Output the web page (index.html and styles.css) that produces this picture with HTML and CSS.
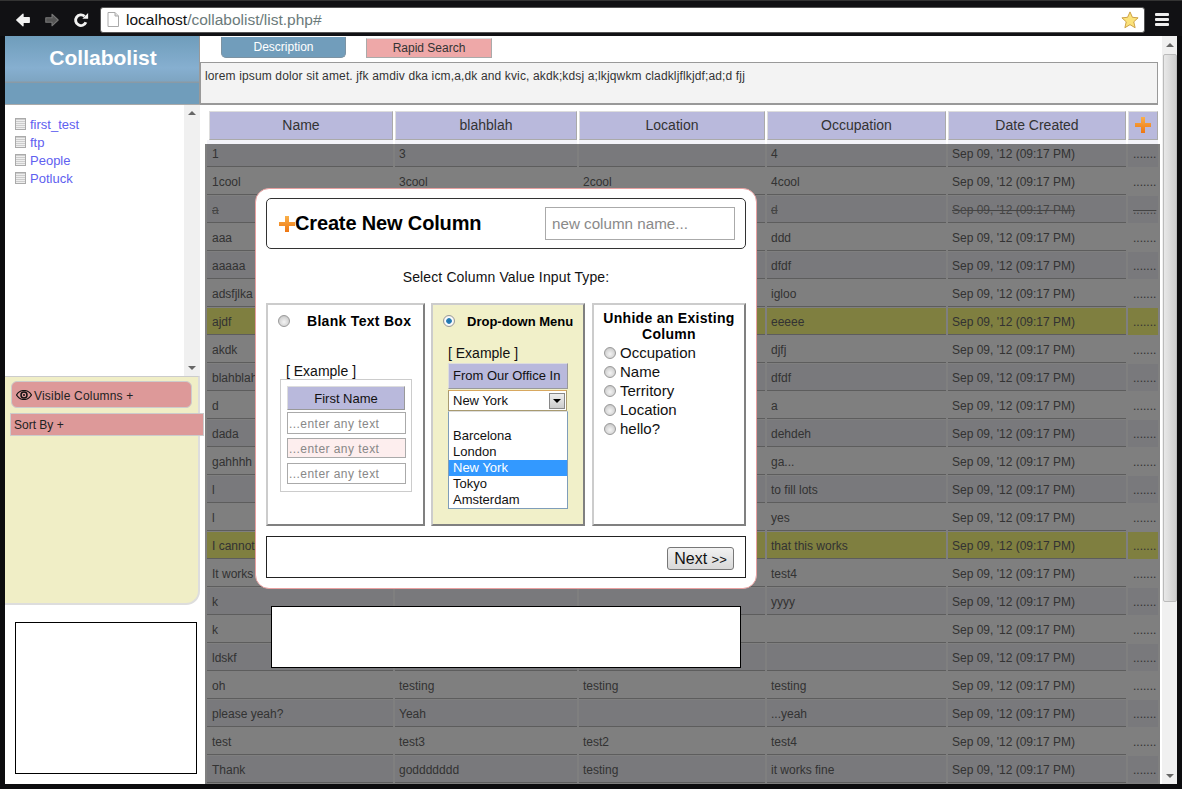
FILE: index.html
```html
<!DOCTYPE html>
<html lang="en">
<head>
    <meta charset="UTF-8">
    <title>Collabolist</title>
    <link rel="stylesheet" href="styles.css">
</head>
<body>
    <!-- Browser toolbar -->
    <header class="toolbar">
        <svg class="nav-icon" viewBox="0 0 18 18"><path d="M2 9 L9 2.500 V6.500 H16 V11.500 H9 V15.500 Z" fill="#f2f2f2" stroke="#f2f2f2" stroke-width="1.500" stroke-linejoin="round"/></svg>
        <svg class="nav-icon" viewBox="0 0 18 18"><path d="M16 9 L9 2.500 V6.500 H2 V11.500 H9 V15.500 Z" fill="#555" stroke="#777" stroke-width="1.200" stroke-linejoin="round"/></svg>
        <svg class="nav-icon" viewBox="0 0 18 18"><path d="M14.500 11.500 A6 6 0 1 1 13 4.800" fill="none" stroke="#f2f2f2" stroke-width="3.200"/><path d="M10.500 7.500 H17 V1 Z" fill="#f2f2f2"/></svg>
        <div class="url-bar">
            <svg class="page-icon" viewBox="0 0 12 15"><path d="M1 .5 H8 L11.500 4 V14.500 H1 Z" fill="#fff" stroke="#aaa"/><path d="M8 .5 V4 H11.500" fill="#ddd" stroke="#aaa"/></svg>
            <span class="url-host">localhost</span><span class="url-path">/collabolist/list.php#</span>
            <svg class="star-icon" viewBox="0 0 20 20"><path d="M10 1 L12.700 7 L19 7.600 L14.200 12 L15.700 18.600 L10 15.200 L4.300 18.600 L5.800 12 L1 7.600 L7.300 7 Z" fill="#fbe27a" stroke="#c79a3c"/></svg>
        </div>
        <div class="menu-icon"><span></span><span></span><span></span></div>
    </header>

    <div class="page">
        <!-- Left column -->
        <aside class="sidebar">
            <div class="brand">
                <h1>Collabolist</h1>
            </div>
            <div class="list-box">
                <ul class="list-links">
                    <li><span class="sheet-icon"></span><a href="#">first_test</a></li>
                    <li><span class="sheet-icon"></span><a href="#">ftp</a></li>
                    <li><span class="sheet-icon"></span><a href="#">People</a></li>
                    <li><span class="sheet-icon"></span><a href="#">Potluck</a></li>
                </ul>
                <div class="mini-scroll"><span class="arrow-up"></span><span class="arrow-down"></span></div>
            </div>
            <div class="options">
                <div class="visible-btn">
                    <svg class="eye-icon" viewBox="0 0 16 10"><path d="M.5 5 C3 1 5.500 .5 8 .5 C10.500 .5 13 1 15.500 5 C13 9 10.500 9.500 8 9.500 C5.500 9.500 3 9 .5 5 Z" fill="none" stroke="#111" stroke-width="1.200"/><circle cx="8" cy="5" r="3" fill="none" stroke="#111" stroke-width="1.500"/><circle cx="8" cy="5" r="1" fill="#111"/></svg>
                    Visible Columns +
                </div>
                <div class="sort-btn">Sort By +</div>
            </div>
            <div class="side-box"></div>
        </aside>

        <!-- Main column -->
        <main class="content">
            <div class="tabs">
                <div class="tab tab-desc">Description</div>
                <div class="tab tab-search">Rapid Search</div>
            </div>
            <div class="description">lorem ipsum dolor sit amet. jfk amdiv dka icm,a,dk and kvic, akdk;kdsj a;lkjqwkm cladkljflkjdf;ad;d fjj</div>

            <div class="table-head">
                <div class="th">Name</div>
                <div class="th">blahblah</div>
                <div class="th">Location</div>
                <div class="th">Occupation</div>
                <div class="th">Date Created</div>
                <div class="th"><svg class="plus-icon" viewBox="0 0 16 16"><use href="#plus"/></svg></div>
            </div>

            <div class="table-body">
                <div class="row alt"><div class="cell">1</div><div class="cell">3</div><div class="cell"></div><div class="cell">4</div><div class="cell">Sep 09, '12 (09:17 PM)</div><div class="cell">.......</div></div>
                <div class="row"><div class="cell">1cool</div><div class="cell">3cool</div><div class="cell">2cool</div><div class="cell">4cool</div><div class="cell">Sep 09, '12 (09:17 PM)</div><div class="cell">.......</div></div>
                <div class="row alt struck"><div class="cell">a</div><div class="cell"></div><div class="cell"></div><div class="cell">d</div><div class="cell">Sep 09, '12 (09:17 PM)</div><div class="cell">.......</div></div>
                <div class="row"><div class="cell">aaa</div><div class="cell"></div><div class="cell"></div><div class="cell">ddd</div><div class="cell">Sep 09, '12 (09:17 PM)</div><div class="cell">.......</div></div>
                <div class="row alt"><div class="cell">aaaaa</div><div class="cell"></div><div class="cell"></div><div class="cell">dfdf</div><div class="cell">Sep 09, '12 (09:17 PM)</div><div class="cell">.......</div></div>
                <div class="row"><div class="cell">adsfjlka</div><div class="cell"></div><div class="cell"></div><div class="cell">igloo</div><div class="cell">Sep 09, '12 (09:17 PM)</div><div class="cell">.......</div></div>
                <div class="row marked"><div class="cell">ajdf</div><div class="cell"></div><div class="cell"></div><div class="cell">eeeee</div><div class="cell">Sep 09, '12 (09:17 PM)</div><div class="cell">.......</div></div>
                <div class="row"><div class="cell">akdk</div><div class="cell"></div><div class="cell"></div><div class="cell">djfj</div><div class="cell">Sep 09, '12 (09:17 PM)</div><div class="cell">.......</div></div>
                <div class="row alt"><div class="cell">blahblah</div><div class="cell"></div><div class="cell"></div><div class="cell">dfdf</div><div class="cell">Sep 09, '12 (09:17 PM)</div><div class="cell">.......</div></div>
                <div class="row"><div class="cell">d</div><div class="cell"></div><div class="cell"></div><div class="cell">a</div><div class="cell">Sep 09, '12 (09:17 PM)</div><div class="cell">.......</div></div>
                <div class="row alt"><div class="cell">dada</div><div class="cell"></div><div class="cell"></div><div class="cell">dehdeh</div><div class="cell">Sep 09, '12 (09:17 PM)</div><div class="cell">.......</div></div>
                <div class="row"><div class="cell">gahhhh</div><div class="cell"></div><div class="cell"></div><div class="cell">ga...</div><div class="cell">Sep 09, '12 (09:17 PM)</div><div class="cell">.......</div></div>
                <div class="row alt"><div class="cell">l</div><div class="cell"></div><div class="cell"></div><div class="cell">to fill lots</div><div class="cell">Sep 09, '12 (09:17 PM)</div><div class="cell">.......</div></div>
                <div class="row"><div class="cell">l</div><div class="cell"></div><div class="cell"></div><div class="cell">yes</div><div class="cell">Sep 09, '12 (09:17 PM)</div><div class="cell">.......</div></div>
                <div class="row marked"><div class="cell">I cannot</div><div class="cell"></div><div class="cell"></div><div class="cell">that this works</div><div class="cell">Sep 09, '12 (09:17 PM)</div><div class="cell">.......</div></div>
                <div class="row"><div class="cell">It works</div><div class="cell"></div><div class="cell"></div><div class="cell">test4</div><div class="cell">Sep 09, '12 (09:17 PM)</div><div class="cell">.......</div></div>
                <div class="row alt"><div class="cell">k</div><div class="cell"></div><div class="cell"></div><div class="cell">yyyy</div><div class="cell">Sep 09, '12 (09:17 PM)</div><div class="cell">.......</div></div>
                <div class="row"><div class="cell">k</div><div class="cell"></div><div class="cell"></div><div class="cell"></div><div class="cell">Sep 09, '12 (09:17 PM)</div><div class="cell">.......</div></div>
                <div class="row alt"><div class="cell">ldskf</div><div class="cell"></div><div class="cell"></div><div class="cell"></div><div class="cell">Sep 09, '12 (09:17 PM)</div><div class="cell">.......</div></div>
                <div class="row"><div class="cell">oh</div><div class="cell">testing</div><div class="cell">testing</div><div class="cell">testing</div><div class="cell">Sep 09, '12 (09:17 PM)</div><div class="cell">.......</div></div>
                <div class="row alt"><div class="cell">please yeah?</div><div class="cell">Yeah</div><div class="cell"></div><div class="cell">...yeah</div><div class="cell">Sep 09, '12 (09:17 PM)</div><div class="cell">.......</div></div>
                <div class="row"><div class="cell">test</div><div class="cell">test3</div><div class="cell">test2</div><div class="cell">test4</div><div class="cell">Sep 09, '12 (09:17 PM)</div><div class="cell">.......</div></div>
                <div class="row alt"><div class="cell">Thank</div><div class="cell">goddddddd</div><div class="cell">testing</div><div class="cell">it works fine</div><div class="cell">Sep 09, '12 (09:17 PM)</div><div class="cell">.......</div></div>

                <div class="overlay"></div>

                <!-- Create column dialog -->
                <div class="modal">
                    <div class="modal-title">
                        <svg class="title-plus" viewBox="0 0 16 16"><use href="#plus"/></svg>
                        <h2>Create New Column</h2>
                        <input class="name-input" type="text" placeholder="new column name...">
                    </div>
                    <p class="modal-prompt">Select Column Value Input Type:</p>
                    <div class="type-cards">
                        <section class="card card-blank">
                            <div class="card-head">
                                <input class="radio" type="radio" name="kind">
                                <strong>Blank Text Box</strong>
                            </div>
                            <div class="example-label">[ Example ]</div>
                            <div class="example-box">
                                <div class="example-th">First Name</div>
                                <div class="example-input">...enter any text</div>
                                <div class="example-input pink">...enter any text</div>
                                <div class="example-input">...enter any text</div>
                            </div>
                        </section>
                        <section class="card card-drop">
                            <div class="card-head">
                                <input class="radio" type="radio" name="kind" checked>
                                <strong>Drop-down Menu</strong>
                            </div>
                            <div class="example-label">[ Example ]</div>
                            <div class="example-th drop-th">From Our Office In</div>
                            <div class="fake-select">New York<span class="select-btn"></span></div>
                            <ul class="fake-options">
                                <li>&nbsp;</li>
                                <li>Barcelona</li>
                                <li>London</li>
                                <li class="selected">New York</li>
                                <li>Tokyo</li>
                                <li>Amsterdam</li>
                            </ul>
                        </section>
                        <section class="card card-hidden">
                            <h3>Unhide an Existing Column</h3>
                            <label class="radio-row"><input class="radio" type="radio" name="old">Occupation</label>
                            <label class="radio-row"><input class="radio" type="radio" name="old">Name</label>
                            <label class="radio-row"><input class="radio" type="radio" name="old">Territory</label>
                            <label class="radio-row"><input class="radio" type="radio" name="old">Location</label>
                            <label class="radio-row"><input class="radio" type="radio" name="old">hello?</label>
                        </section>
                    </div>
                    <div class="modal-foot">
                        <button class="next-btn">Next <small>&gt;&gt;</small></button>
                    </div>
                </div>

                <div class="status-box"></div>
            </div>
        </main>

        <div class="page-scroll">
            <span class="arrow-up"></span>
            <div class="page-thumb"></div>
            <span class="arrow-down"></span>
        </div>
    </div>

    <!-- Shared plus icon -->
    <svg class="defs" width="0" height="0">
        <defs>
            <linearGradient id="plus-fill" x1="0" y1="0" x2="0" y2="1">
                <stop offset="0" stop-color="#f9b04a"/>
                <stop offset="1" stop-color="#ee7612"/>
            </linearGradient>
            <path id="plus" d="M6 0 H10 V6 H16 V10 H10 V16 H6 V10 H0 V6 H6 Z" fill="url(#plus-fill)"/>
        </defs>
    </svg>
</body>
</html>
```

FILE: styles.css
```css
/* Basic reset */
* {
    margin: 0;
    padding: 0;
    box-sizing: border-box;
}

html,
body {
    height: 789px;
    overflow: hidden;
}

body {
    font-family: "Liberation Sans", Arial, sans-serif;
    font-size: 12px;
    background-color: #0c0c0e;
    color: #333;
    display: flex;
    flex-direction: column;
}

ul {
    list-style: none;
}

.defs {
    position: absolute;
}

/* Browser toolbar */
.toolbar {
    height: 36px;
    flex: none;
    display: flex;
    align-items: center;
    padding: 2px 13px 0 15px;
    background-color: #111114;
    border-top: 1px solid #333;
}

.nav-icon {
    width: 16px;
    height: 16px;
    margin-right: 13px;
}

.url-bar {
    flex: 1;
    height: 26px;
    margin-left: -2px;
    display: flex;
    align-items: center;
    padding: 0 5px 0 6px;
    background-color: #fff;
    border: 1px solid #555;
    border-radius: 3px;
    font-size: 15.500px;
}

.page-icon {
    width: 12px;
    height: 15px;
    margin-right: 7px;
}

.url-host {
    color: #111;
}

.url-path {
    color: #6b7a7a;
}

.star-icon {
    width: 18px;
    height: 18px;
    margin-left: auto;
}

.menu-icon {
    width: 14px;
    margin-left: 10px;
    display: flex;
    flex-direction: column;
    gap: 2px;
}

.menu-icon span {
    height: 3px;
    background-color: #eee;
    border-radius: 1px;
}

/* Page frame */
.page {
    flex: 1;
    min-height: 0;
    margin: 0 5px 5px;
    display: flex;
    background-color: #fff;
}

/* Sidebar */
.sidebar {
    width: 195px;
    flex: none;
    display: flex;
    flex-direction: column;
}

.brand {
    height: 68px;
    flex: none;
    border-right: 1px solid #999;
    background: linear-gradient(to bottom, #6f9dbb 0, #86afd0 32px, #7ea5c2 45px, #8a9aa5 46px, #8a9aa5 47px, #709dbb 47px);
}

.brand h1 {
    padding-top: 10px;
    text-align: center;
    font-size: 21px;
    color: #fff;
    margin-left: 2px;
}

.list-box {
    height: 272px;
    flex: none;
    display: flex;
    justify-content: space-between;
    border-top: 1px solid #aaa;
}

.list-links {
    padding: 11px 0 0 10px;
    font-size: 13px;
    line-height: 18px;
}

.list-links li {
    display: flex;
    align-items: center;
    gap: 4px;
}

.list-links a {
    color: #6060f0;
    text-decoration: none;
}

.sheet-icon {
    width: 11px;
    height: 12px;
    margin-top: -3px;
    border: 1px solid #aaa;
    background: repeating-linear-gradient(to bottom, #ccc 0, #ccc 1px, #eee 1px, #eee 2px);
}

.mini-scroll {
    width: 16px;
    background-color: #f0f0f0;
    display: flex;
    flex-direction: column;
    justify-content: space-between;
    align-items: center;
    padding: 6px 0;
}

.arrow-up {
    border: 4px solid transparent;
    border-top: 0;
    border-bottom: 4px solid #666;
}

.arrow-down {
    border: 4px solid transparent;
    border-bottom: 0;
    border-top: 4px solid #666;
}

.options {
    height: 229px;
    flex: none;
    padding: 4px 6px;
    background-color: #f0eec6;
    border-top: 1px solid #ccc;
    border-right: 2px solid #ddd;
    border-bottom: 2px solid #ddd;
    border-bottom-right-radius: 14px;
    color: #222;
}

.visible-btn {
    height: 27px;
    display: flex;
    align-items: center;
    gap: 2px;
    padding: 3px 0 0 4px;
    letter-spacing: 0.2px;
    background-color: #dd9999;
    border: 1px solid #ccc;
    border-radius: 6px;
}

.eye-icon {
    width: 16px;
    height: 10px;
    margin: -3px 0 0 0;
}

.sort-btn {
    height: 23px;
    width: 194px;
    margin: 5px 0 0 -1px;
    padding-left: 3px;
    line-height: 22px;
    background-color: #dd9999;
    border: 1px solid #ccc;
    position: relative;
}

.side-box {
    width: 182px;
    height: 152px;
    margin: 17px 0 0 10px;
    background-color: #fff;
    border: 1px solid #000;
}

/* Main column */
.content {
    flex: 1;
    min-width: 0;
    display: flex;
    flex-direction: column;
}

.tabs {
    height: 26px;
    flex: none;
    display: flex;
    gap: 20px;
    padding: 1px 0 0 21px;
}

.tab {
    width: 125px;
    height: 21px;
    text-align: center;
    line-height: 20px;
}

.tab-desc {
    background-color: #719dbb;
    color: #fff;
    border: 1px solid #7c93a3;
    border-top: 0;
    border-radius: 0 0 5px 5px;
}

.tab-search {
    width: 126px;
    margin-top: 1px;
    height: 20px;
    line-height: 18px;
    background-color: #eea8a8;
    border: 1px solid #aaa;
    border-top-color: #ddd;
}

.description {
    width: 958px;
    height: 43px;
    flex: none;
    padding: 6px 4px;
    background-color: #f3f3f3;
    border: 1px solid #999;
    border-bottom-width: 2px;
    letter-spacing: 0.14px;
}

.table-head {
    flex: none;
    height: 35px;
    padding: 6px 0 0 9px;
    display: grid;
    grid-template-columns: 184px 182px 186px 179px 178px 30px;
    gap: 2px;
}

.th {
    display: flex;
    align-items: center;
    justify-content: center;
    padding-bottom: 2px;
    background-color: #b9b9dc;
    border: 1px solid #aaa;
    border-top-color: #ddd;
    border-left-color: #ddd;
    font-size: 14px;
    color: #333;
}

.plus-icon {
    width: 16px;
    height: 16px;
}

.table-body {
    flex: 1;
    min-height: 0;
    position: relative;
    overflow: hidden;
    margin-left: 5px;
    width: 955px;
}

.row {
    height: 28px;
    padding-left: 2px;
    display: grid;
    grid-template-columns: 186px 182px 186px 179px 178px 30px;
    gap: 2px;
}

.cell {
    height: 27px;
    padding-left: 4px;
    line-height: 28px;
    white-space: nowrap;
    overflow: hidden;
    color: #666;
    border-bottom: 1px solid #bbb;
}

.cell:first-child {
    padding-left: 5px;
}

.row .cell:last-child {
    padding-left: 5px;
    border-bottom: 0;
}

.row.alt .cell {
    background-color: #f3f3f9;
}

.row.marked .cell {
    background-color: #ffff80;
}

.row.struck .cell {
    text-decoration: line-through;
    color: #888;
}

.overlay {
    position: absolute;
    top: 4px;
    left: 0;
    right: 0;
    bottom: 0;
    background-color: rgba(0, 0, 0, 0.5);
}

/* Dialog */
.modal {
    position: absolute;
    left: 50px;
    top: 48px;
    width: 502px;
    height: 401px;
    padding: 9px 10px;
    background-color: #fff;
    border: 1px solid #e8a0a0;
    border-radius: 14px;
    color: #111;
}

.modal-title {
    height: 51px;
    display: flex;
    align-items: center;
    padding: 0 10px 0 12px;
    border: 1px solid #333;
    border-radius: 5px;
}

.title-plus {
    width: 16px;
    height: 16px;
}

.modal-title h2 {
    font-size: 20px;
    letter-spacing: -0.15px;
    color: #000;
}

.name-input {
    width: 190px;
    height: 33px;
    margin-left: auto;
    padding: 0 6px;
    border: 1px solid #aaa;
    font-family: inherit;
    font-size: 15.200px;
}

.name-input::placeholder {
    color: #8a8a8a;
}

.modal-prompt {
    margin-top: 20px;
    text-align: center;
    font-size: 14px;
    line-height: 16px;
    letter-spacing: 0.13px;
}

.type-cards {
    margin-top: 18px;
    height: 223px;
    display: flex;
    gap: 6px;
}

.card {
    width: 159px;
    border: 2px solid;
    border-color: #ccc #808080 #808080 #ccc;
}

.card-drop {
    width: 154px;
    background-color: #f1f0c9;
}

.card-hidden {
    width: 154px;
    margin-left: auto;
    padding: 5px 4px 0 10px;
}

.radio {
    appearance: none;
    flex: none;
    width: 12px;
    height: 12px;
    border: 1px solid #999;
    border-radius: 50%;
    background: radial-gradient(circle at 50% 60%, #f4f4f4 0, #d4d4d4 60%, #b4b4b4 100%);
}

.radio:checked {
    background: radial-gradient(circle, #1d6fa8 0, #2a80b8 35%, #fff 45%, #ddd 100%);
}

.card-head {
    display: flex;
    align-items: center;
    padding: 6px 0 0 10px;
    height: 26px;
}

.card-head strong {
    font-size: 14px;
    color: #000;
}

.card-blank .card-head strong {
    margin-left: 17px;
    letter-spacing: 0.3px;
}

.card-drop .card-head strong {
    margin-left: 12px;
    font-size: 13px;
}

.example-label {
    font-size: 14px;
    line-height: 16px;
}

.card-blank .example-label {
    margin: 32px 0 0 18px;
}

.card-drop .example-label {
    margin: 14px 0 0 15px;
}

.example-box {
    width: 132px;
    height: 113px;
    margin: 0 0 0 12px;
    padding: 6px;
    border: 1px solid #ccc;
}

.example-th {
    height: 24px;
    background-color: #b9b9dc;
    border: 1px solid #999;
    border-top-color: #ddd;
    border-left-color: #ddd;
    text-align: center;
    line-height: 23px;
    font-size: 13px;
}

.example-input {
    width: 119px;
    height: 22px;
    margin-top: 2px;
    padding-left: 1px;
    border: 1px solid #aaa;
    color: #888;
    line-height: 22px;
    letter-spacing: 0.45px;
}

.example-input + .example-input {
    margin-top: 4px;
}

.example-input.pink {
    height: 20px;
    line-height: 20px;
    background-color: #fdeeee;
}

.example-input.pink + .example-input {
    height: 21px;
    line-height: 21px;
    margin-top: 5px;
}

.drop-th {
    width: 120px;
    height: 26px;
    margin: 2px 0 0 15px;
    line-height: 24px;
    text-align: left;
    padding-left: 4px;
}

.fake-select {
    width: 119px;
    height: 21px;
    margin: 1px 0 0 15px;
    padding-left: 4px;
    background-color: #fff;
    border: 1px solid #a89a70;
    border-top-color: #d8a860;
    display: flex;
    justify-content: space-between;
    align-items: center;
    font-size: 13px;
}

.select-btn {
    width: 16px;
    height: 16px;
    margin-right: 1px;
    background: linear-gradient(#eee, #ccc);
    border: 1px solid #888;
    display: flex;
    align-items: center;
    justify-content: center;
}

.select-btn::after {
    content: "";
    border: 4px solid transparent;
    border-bottom: 0;
    border-top: 4px solid #000;
}

.fake-options {
    width: 120px;
    height: 98px;
    margin-left: 15px;
    background-color: #fff;
    border: 1px solid #7f9db9;
    border-top-color: #ddd;
    font-size: 13px;
    line-height: 16px;
}

.fake-options li {
    padding-left: 4px;
}

.fake-options .selected {
    background-color: #3399ff;
    color: #fff;
}

.card-hidden h3 {
    margin-left: -6px;
    font-size: 14px;
    line-height: 16px;
    text-align: center;
    letter-spacing: 0.3px;
    color: #000;
}

.radio-row {
    height: 19px;
    display: flex;
    align-items: center;
    gap: 4px;
    font-size: 15px;
}

.card-hidden h3 + .radio-row {
    margin-top: 1px;
}

.modal-foot {
    height: 42px;
    margin-top: 10px;
    padding: 10px 11px 0 0;
    border: 1px solid #222;
    text-align: right;
}

.next-btn {
    width: 67px;
    height: 23px;
    border: 1px solid #777;
    border-radius: 3px;
    background: linear-gradient(#f2f2f2, #d8d8d8);
    font-family: inherit;
    font-size: 16px;
    color: #111;
}

.next-btn small {
    font-size: 13px;
}

.status-box {
    position: absolute;
    left: 66px;
    top: 466px;
    width: 470px;
    height: 62px;
    background-color: #fff;
    border: 1px solid #000;
}

/* Page scrollbar */
.page-scroll {
    width: 15px;
    flex: none;
    display: flex;
    flex-direction: column;
    align-items: center;
    padding-top: 7px;
    background-color: #f0f0f0;
}

.page-thumb {
    width: 14px;
    height: 548px;
    margin-top: 7px;
    border: 1px solid #bbb;
    border-radius: 2px;
    background: linear-gradient(to right, #e8e8e8, #cfcfcf);
}

.page-scroll .arrow-down {
    margin-top: auto;
    margin-bottom: 6px;
}
```
